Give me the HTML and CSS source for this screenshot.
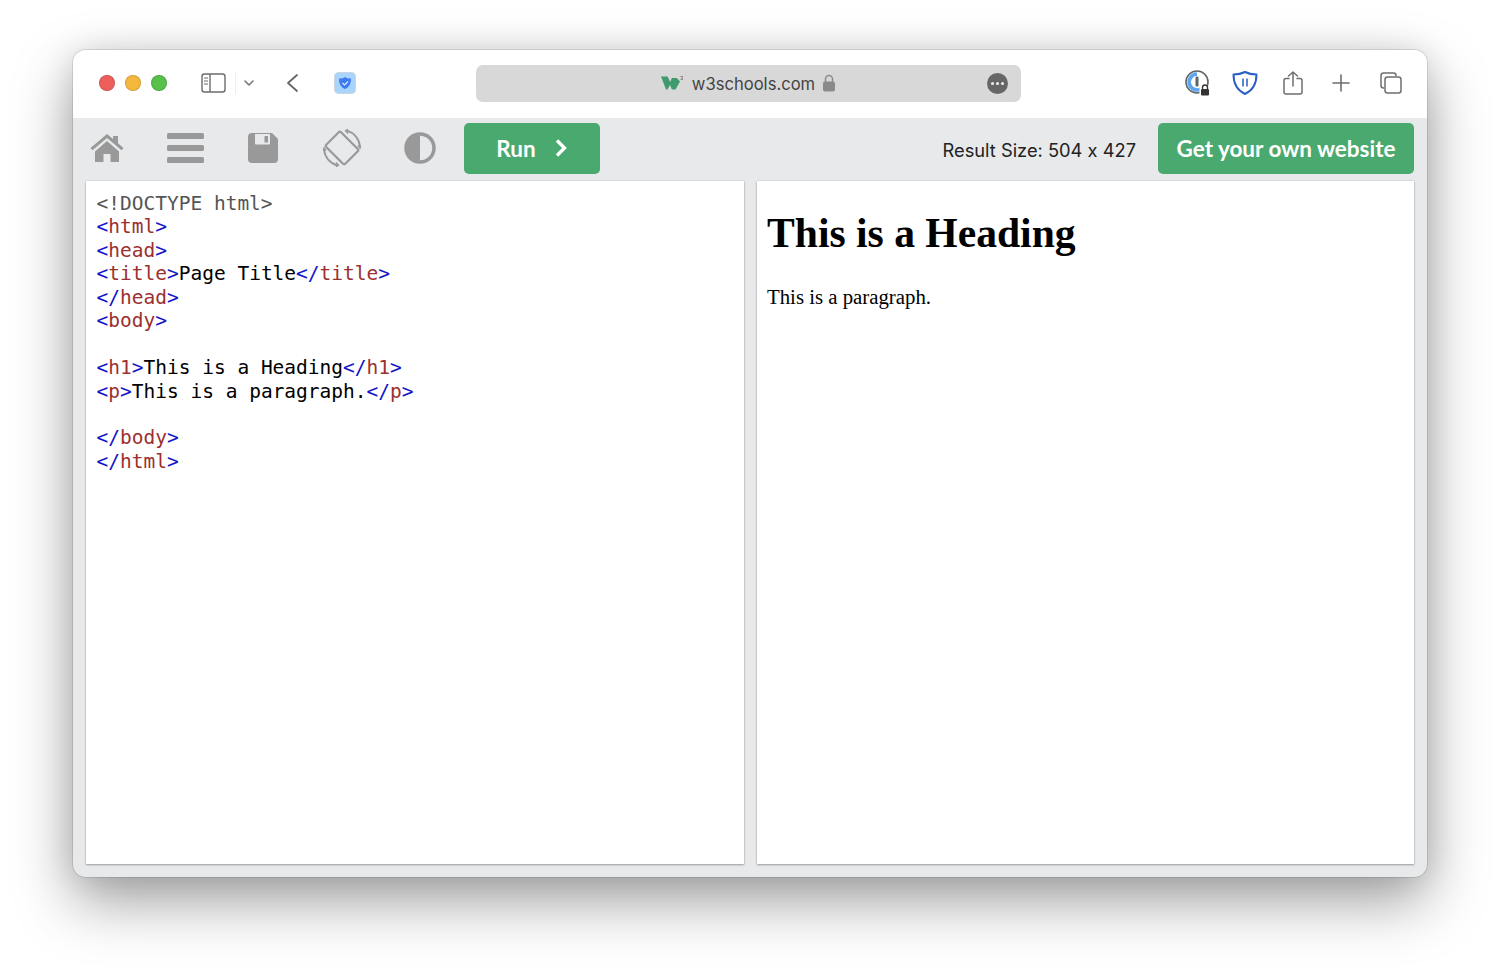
FILE: index.html
```html
<!DOCTYPE html>
<html lang="en">
<head>
<meta charset="utf-8">
<title>w3schools.com</title>
<link rel="stylesheet" href="styles.css">
</head>
<body>
<div class="window">
  <header class="titlebar">
    <div class="lights">
      <span class="light red"></span><span class="light yellow"></span><span class="light green"></span>
    </div>
    <svg class="ic sidebar" width="26" height="22" viewBox="0 0 26 22" fill="none" stroke="#6b6b6b" stroke-width="1.4">
      <rect x="2" y="2" width="23" height="18" rx="2.5"/><path d="M10 2v18"/><path d="M4 6h4M4 9h4M4 12h4" stroke-width="1"/>
    </svg>
    <span class="sep"></span>
    <svg class="ic chev" width="12" height="8" viewBox="0 0 12 8" fill="none" stroke="#777" stroke-width="1.6" stroke-linecap="round" stroke-linejoin="round"><path d="M2 2l4 4 4-4"/></svg>
    <svg class="ic back" width="14" height="20" viewBox="0 0 14 20" fill="none" stroke="#666" stroke-width="1.8" stroke-linecap="round" stroke-linejoin="round"><path d="M12 2L3 10l9 8"/></svg>
    <svg class="ic ext" width="24" height="24" viewBox="0 0 24 24">
      <rect x="1.5" y="1.5" width="21" height="21" rx="4" fill="#a9d4fb" stroke="#c9d5df"/>
      <path d="M6 7.500C9 7.500 10.500 7 12 6c1.500 1 3 1.500 6 1.500 0 5-1.500 8.500-6 10.500-4.500-2-6-5.500-6-10.500z" fill="#3f7bf0"/>
      <path d="M9.500 12l2 2 3.500-3.500" fill="none" stroke="#dfeaff" stroke-width="1.200"/>
    </svg>
    <div class="address">
      <div class="address-center">
        <svg class="logo" width="22" height="16" viewBox="0 0 22 16"><path d="M0 1.500h6.500l2.800 5.500 1.500-4h5l3.200 3.500L14.500 14.500H11L9 10l-2.500 4.500H5z" fill="#3f9a6e"/><text x="19" y="4.500" class="logo-three">3</text></svg>
        <span class="domain">w3schools.com</span>
        <svg class="lock" width="14" height="18" viewBox="0 0 14 18"><path d="M3.500 8V5a3.500 3.500 0 0 1 7 0v3" fill="none" stroke="#8a8a8a" stroke-width="1.500"/><rect x="1" y="7.500" width="12" height="10" rx="2" fill="#8a8a8a"/></svg>
      </div>
      <span class="more"><i></i><i></i><i></i></span>
    </div>
    <div class="right-icons">
      <svg width="28" height="28" viewBox="0 0 28 28" fill="none">
        <circle cx="13" cy="13" r="11" stroke="#5f6468" stroke-width="1.600"/>
        <path d="M13 5a8 8 0 1 0 6 13.500" stroke="#5ea4ee" stroke-width="3.600"/>
        <rect x="11.500" y="7.500" width="3" height="10" rx="1.200" fill="#5f6468"/>
        <rect x="15.500" y="17" width="11" height="10" rx="2" fill="#fff"/>
        <path d="M18.500 20v-1.500a2.500 2.500 0 0 1 5 0V20" stroke="#333" stroke-width="1.400"/>
        <rect x="17" y="20" width="8" height="6.500" rx="1.200" fill="#333"/>
      </svg>
      <svg class="shield" width="26" height="24" viewBox="0 0 26 24" fill="none">
        <path d="M1.500 3.500C5.500 3.500 9.500 2.800 13 1c3.500 1.800 7.500 2.500 11.500 2.500 0 8.500-3 15.500-11.500 19.500C4.500 19 1.500 12 1.500 3.500z" stroke="#2a5fc4" stroke-width="2" stroke-linejoin="round"/>
        <path d="M11 7.500v8M15 7.500v8" stroke="#4a78d0" stroke-width="1.800"/>
      </svg>
      <svg class="share" width="22" height="24" viewBox="0 0 22 24" fill="none" stroke="#6e6e6e" stroke-width="1.500" stroke-linecap="round" stroke-linejoin="round">
        <path d="M7 7.500H4a2 2 0 0 0-2 2v11.500a2 2 0 0 0 2 2h14a2 2 0 0 0 2-2V9.500a2 2 0 0 0-2-2h-3"/><path d="M11 15V1M6.500 5L11 1l4.500 4"/>
      </svg>
      <svg class="plus" width="20" height="20" viewBox="0 0 20 20" fill="none" stroke="#6e6e6e" stroke-width="1.600" stroke-linecap="round"><path d="M10 2v16M2 10h16"/></svg>
      <svg class="tabs" width="24" height="24" viewBox="0 0 24 24" fill="none" stroke="#6e6e6e" stroke-width="1.500">
        <path d="M5 17h-.5A2.500 2.500 0 0 1 2 14.500v-10A2.500 2.500 0 0 1 4.500 2h10A2.500 2.500 0 0 1 17 4.500V5"/><rect x="6" y="6" width="16" height="16" rx="2.500"/>
      </svg>
    </div>
  </header>
  <nav class="toolbar">
    <svg class="tool home" width="34" height="30" viewBox="0 0 34 30" fill="#999"><path d="M17 1L0.500 15l2 2.300L17 5l14.500 12.300 2-2.300L28 10.300V3h-5v3z"/><path d="M5 18.500L17 8l12 10.500V29h-8.500v-8h-7v8H5z"/></svg>
    <svg class="tool menu" width="37" height="30" viewBox="0 0 37 30" fill="#999"><rect y="0" width="37" height="6" rx="1.500"/><rect y="12" width="37" height="6" rx="1.500"/><rect y="24" width="37" height="6" rx="1.500"/></svg>
    <svg class="tool save" width="30" height="30" viewBox="0 0 30 30"><path d="M4 0h20l6 6v20a4 4 0 0 1-4 4H4a4 4 0 0 1-4-4V4a4 4 0 0 1 4-4z" fill="#999"/><path d="M7 1h15v9.500a1 1 0 0 1-1 1H8a1 1 0 0 1-1-1z" fill="#e7e9eb"/><rect x="16.500" y="3" width="3.500" height="6.500" fill="#999"/></svg>
    <svg class="tool rotate" width="38" height="38" viewBox="0 0 38 38" fill="none" stroke="#999" stroke-width="1.800">
      <rect x="8.500" y="5.500" width="21" height="27" rx="2" transform="rotate(-45 19 19)" stroke-width="2.200"/>
      <path d="M23.700 1.600A18 18 0 0 1 36.900 17.400M14.300 36.400A18 18 0 0 1 1.100 20.600"/>
      <path d="M25 0l-2.500 1.800L25 4.500M35 16.500l2 2.500 1-3M13 38l2.500-1.800-2.500-2.700M3 21.500L1 19l-1 3" stroke-width="1.400"/>
    </svg>
    <svg class="tool contrast" width="32" height="32" viewBox="0 0 32 32"><circle cx="16" cy="16" r="14" fill="none" stroke="#999" stroke-width="3.500"/><path d="M16 2a14 14 0 0 0 0 28z" fill="#999"/></svg>
    <button class="btn run"><span>Run</span><svg width="14" height="18" viewBox="0 0 14 18" fill="none" stroke="#fff" stroke-width="3.400"><path d="M3 1.500l7.500 7.500-7.500 7.500"/></svg></button>
    <span class="result">Result Size: 504 x 427</span>
    <button class="btn own">Get your own website</button>
  </nav>
  <main class="panes">
    <pre class="pane code"><span class="doc">&lt;!DOCTYPE html&gt;</span>
<b>&lt;</b><em>html</em><b>&gt;</b>
<b>&lt;</b><em>head</em><b>&gt;</b>
<b>&lt;</b><em>title</em><b>&gt;</b>Page Title<b>&lt;/</b><em>title</em><b>&gt;</b>
<b>&lt;/</b><em>head</em><b>&gt;</b>
<b>&lt;</b><em>body</em><b>&gt;</b>

<b>&lt;</b><em>h1</em><b>&gt;</b>This is a Heading<b>&lt;/</b><em>h1</em><b>&gt;</b>
<b>&lt;</b><em>p</em><b>&gt;</b>This is a paragraph.<b>&lt;/</b><em>p</em><b>&gt;</b>

<b>&lt;/</b><em>body</em><b>&gt;</b>
<b>&lt;/</b><em>html</em><b>&gt;</b></pre>
    <section class="pane output">
      <h1>This is a Heading</h1>
      <p>This is a paragraph.</p>
    </section>
  </main>
</div>
</body>
</html>
```
FILE: styles.css
```css
* { box-sizing: border-box; }
html, body { height: 100%; }
body {
  margin: 0;
  background: #fff;
  padding: 50px 73px 96px;
  overflow: hidden;
}
.window {
  height: 827px;
  border-radius: 13px;
  background: #e7e9eb;
  box-shadow: 0 0 0 1px rgba(0,0,0,.1), 0 24px 60px rgba(0,0,0,.38), 0 0 30px rgba(0,0,0,.1);
  display: flex;
  flex-direction: column;
  overflow: hidden;
}
.titlebar {
  height: 68px;
  background: #fff;
  display: flex;
  align-items: center;
  padding: 0 0 2px 26px;
  flex: none;
}
.lights { display: flex; gap: 10px; }
.light { width: 16px; height: 16px; border-radius: 50%; border: 1px solid rgba(0,0,0,.14); }
.red { background: #ee5f5b; }
.yellow { background: #f5b83d; }
.green { background: #57c14b; }
.ic { flex: none; }
.sidebar { margin-left: 33px; }
.sep { width: 1px; height: 22px; background: #eee; margin-left: 9px; }
.chev { margin-left: 7px; }
.back { margin-left: 30px; }
.ext { margin-left: 34px; }
.address {
  width: 545px;
  height: 37px;
  margin-left: 119px;
  border-radius: 7px;
  background: #d8d8d8;
  display: flex;
  align-items: center;
  position: relative;
  padding-right: 13px;
}
.address-center { flex: 1; display: flex; align-items: center; justify-content: center; padding-left: 34px; }
.logo { margin-right: 9px; }
.logo-three { font: 6px "Liberation Sans", sans-serif; fill: #555; }
.domain { font: 16.6px/20px "Inter", "Liberation Sans", sans-serif; color: #444; padding-top: 2px; }
.lock { margin-left: 7px; }
.more {
  width: 21px; height: 21px; border-radius: 50%; background: #666;
  display: flex; align-items: center; justify-content: center; gap: 2px;
}
.more i { width: 3px; height: 3px; border-radius: 50%; background: #eee; }
.right-icons { display: flex; align-items: center; margin-left: 163px; }
.shield { margin-left: 20px; }
.share { margin-left: 24px; }
.plus { margin-left: 26.5px; }
.tabs { margin-left: 28px; }
.toolbar {
  height: 63px;
  display: flex;
  align-items: center;
  padding: 0 13px 3px 17px;
  flex: none;
}
.tool { flex: none; }
.menu { margin-left: 43px; }
.save { margin-left: 44px; }
.rotate { margin-left: 45px; }
.contrast { margin-left: 43px; }
.btn {
  border: 0;
  background: #4aa96f;
  color: #fff;
  border-radius: 5px;
  height: 51px;
  font: 700 22.5px "Lato", sans-serif;
  display: flex;
  align-items: center;
  justify-content: center;
}
.run { width: 136px; gap: 18px; margin-left: 28px; }
.result {
  margin: 3px 22px 0 auto;
  font: 18.3px "Inter", sans-serif;
  font-feature-settings: "calt" 0;
  color: #222;
}
.own { width: 256px; }
.panes {
  flex: 1;
  display: flex;
  gap: 13px;
  padding: 0 13px 13px;
  min-height: 0;
}
.pane {
  flex: 1;
  margin: 0;
  background: #fff;
  box-shadow: 0 1px 2px rgba(0,0,0,.3), 0 0 2px rgba(0,0,0,.12);
  color: #000;
}
.code {
  padding: 11px 10.5px;
  font: 19.5px/23.44px "DejaVu Sans Mono", monospace;
}
.code b { font-weight: 400; color: #1414c8; }
.code em { font-style: normal; color: #9c3030; }
.doc { color: #555; }
.output { padding: 0 10.5px; font-family: "Liberation Serif", serif; }
.output h1 { font-size: 41.6px; line-height: 48px; margin: 28px 0 0; }
.output p { font-size: 20.8px; line-height: 24px; margin: 28px 0 0; }
```
